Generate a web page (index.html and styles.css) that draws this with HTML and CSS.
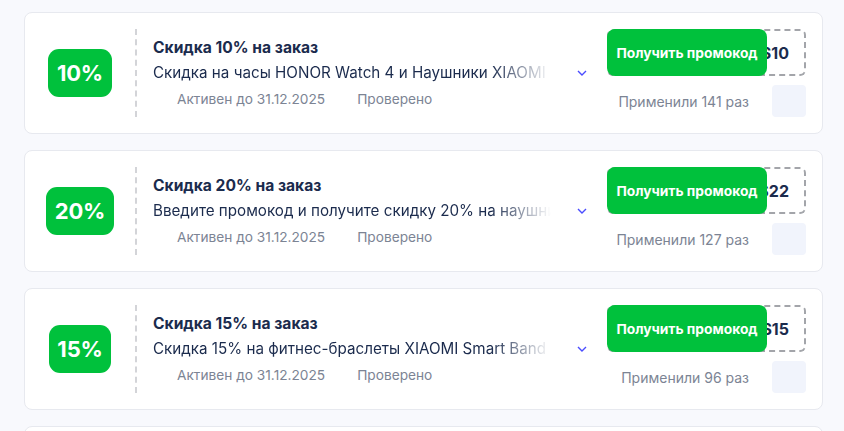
FILE: index.html
```html
<!DOCTYPE html>
<html lang="ru">
<head>
<meta charset="utf-8">
<title>Промокоды</title>
<link rel="stylesheet" href="styles.css">
</head>
<body>
<div class="list">
  <div class="card">
    <div class="badge-col"><div class="badge">10%</div></div>
    <div class="info">
      <div class="title">Скидка 10% на заказ</div>
      <div class="desc-row">
        <div class="desc">Скидка на часы HONOR Watch 4 и Наушники XIAOMI Redmi Buds</div>
        <svg class="chev" width="10" height="6" viewBox="0 0 10 6"><polyline points="1,1 5,5 9,1" fill="none" stroke="#4a4cff" stroke-width="1.4"/></svg>
      </div>
      <div class="meta">
        <span class="meta-item"><span class="ico"></span>Активен до 31.12.2025</span>
        <span class="meta-item"><span class="ico"></span>Проверено</span>
      </div>
    </div>
    <div class="action">
      <div class="code-box"><span class="code">HONORS10</span><button class="get">Получить промокод</button></div>
      <div class="applied-row"><span class="applied">Применили 141 раз</span><span class="sq"></span></div>
    </div>
  </div>

  <div class="card">
    <div class="badge-col"><div class="badge">20%</div></div>
    <div class="info">
      <div class="title">Скидка 20% на заказ</div>
      <div class="desc-row">
        <div class="desc">Введите промокод и получите скидку 20% на наушники и часы</div>
        <svg class="chev" width="10" height="6" viewBox="0 0 10 6"><polyline points="1,1 5,5 9,1" fill="none" stroke="#4a4cff" stroke-width="1.4"/></svg>
      </div>
      <div class="meta">
        <span class="meta-item"><span class="ico"></span>Активен до 31.12.2025</span>
        <span class="meta-item"><span class="ico"></span>Проверено</span>
      </div>
    </div>
    <div class="action">
      <div class="code-box"><span class="code">XIAOMIS22</span><button class="get">Получить промокод</button></div>
      <div class="applied-row"><span class="applied">Применили 127 раз</span><span class="sq"></span></div>
    </div>
  </div>

  <div class="card">
    <div class="badge-col"><div class="badge">15%</div></div>
    <div class="info">
      <div class="title">Скидка 15% на заказ</div>
      <div class="desc-row">
        <div class="desc">Скидка 15% на фитнес-браслеты XIAOMI Smart Band 8 и 9</div>
        <svg class="chev" width="10" height="6" viewBox="0 0 10 6"><polyline points="1,1 5,5 9,1" fill="none" stroke="#4a4cff" stroke-width="1.4"/></svg>
      </div>
      <div class="meta">
        <span class="meta-item"><span class="ico"></span>Активен до 31.12.2025</span>
        <span class="meta-item"><span class="ico"></span>Проверено</span>
      </div>
    </div>
    <div class="action">
      <div class="code-box"><span class="code">BANDS15</span><button class="get">Получить промокод</button></div>
      <div class="applied-row"><span class="applied">Применили 96 раз</span><span class="sq"></span></div>
    </div>
  </div>

  <div class="card">
    <div class="badge-col"><div class="badge">5%</div></div>
    <div class="info">
      <div class="title">Скидка 5% на заказ</div>
    </div>
  </div>
</div>
</body>
</html>
```
FILE: styles.css
```css
* { box-sizing: border-box; }
html, body {
  margin: 0;
  padding: 0;
  background: #f8f9fd;
  font-family: Inter, "Noto Sans", "Liberation Sans", sans-serif;
  overflow: hidden;
}
.list {
  display: flex;
  flex-direction: column;
  gap: 16px;
  padding: 12px 21px 0 24px;
}
.card {
  display: flex;
  align-items: stretch;
  height: 122px;
  flex-shrink: 0;
  background: #fff;
  border: 1px solid #e7e9ef;
  border-radius: 8px;
  padding: 16px 16px 16px 0;
}
.badge-col {
  width: 112px;
  flex-shrink: 0;
  display: flex;
  align-items: center;
  justify-content: center;
  border-right: 2px dashed #d3d4d8;
}
.badge {
  background: #00c13c;
  color: #fff;
  font-weight: 700;
  font-size: 22px;
  line-height: 48px;
  height: 48px;
  padding: 0 8.5px;
  border-radius: 11px;
  letter-spacing: -0.2px;
}
.info {
  flex: 1;
  min-width: 0;
  padding-left: 16px;
  display: flex;
  flex-direction: column;
  justify-content: center;
  margin-right: 16px;
}
.title {
  font-size: 15.6px;
  font-weight: 700;
  color: #1b2b4d;
  line-height: 22px;
}
.desc-row {
  display: flex;
  align-items: center;
  gap: 26px;
  margin-top: 3px;
}
.desc {
  flex: 1;
  min-width: 0;
  font-size: 15.2px;
  color: #1b2b4d;
  line-height: 22px;
  white-space: nowrap;
  overflow: hidden;
  -webkit-mask-image: linear-gradient(to right, #000 calc(100% - 60px), transparent 100%);
  mask-image: linear-gradient(to right, #000 calc(100% - 60px), transparent 100%);
}
.chev { flex-shrink: 0; margin-right: 4px; }
.meta {
  display: flex;
  gap: 8px;
  margin-top: 4px;
  font-size: 13.7px;
  color: #7c8494;
  line-height: 22px;
}
.meta-item { display: flex; align-items: center; gap: 8px; }
.ico { width: 16px; height: 16px; display: inline-block; }
.action {
  width: 199px;
  flex-shrink: 0;
  display: flex;
  flex-direction: column;
  gap: 9px;
}
.code-box {
  position: relative;
  height: 47px;
  flex-shrink: 0;
  border: 2px dashed #a3a5aa;
  border-radius: 6px;
  display: flex;
  align-items: center;
  justify-content: flex-end;
  padding-right: 15px;
}
.code {
  font-size: 16px;
  font-weight: 700;
  color: #1b2b4d;
}
.get {
  position: absolute;
  left: -2px;
  top: -2px;
  width: 160px;
  height: 47px;
  border: none;
  border-radius: 8px;
  background: #00c13c;
  color: #fff;
  font-family: inherit;
  font-size: 13.8px;
  font-weight: 700;
  padding: 0;
}
.applied-row {
  display: flex;
  align-items: center;
  justify-content: flex-end;
  gap: 23px;
  height: 32px;
  flex-shrink: 0;
}
.applied {
  font-size: 14px;
  color: #7c8494;
}
.sq {
  width: 34px;
  height: 32px;
  background: #f1f4fc;
  border-radius: 4px;
}
```
